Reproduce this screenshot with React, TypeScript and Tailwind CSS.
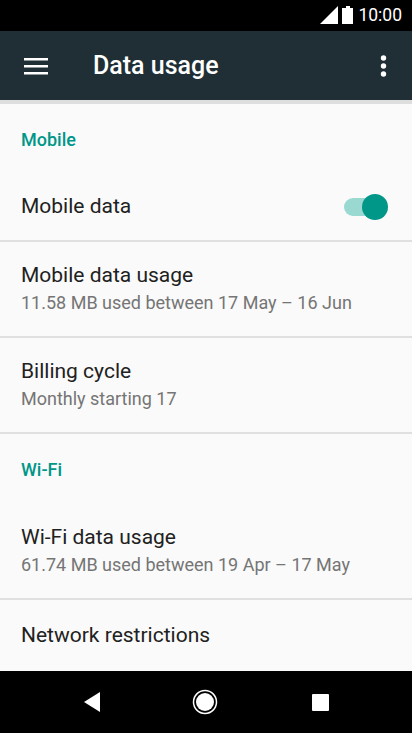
import React from "react";

function StatusBar() {
    return (
        <div className="flex h-[31px] items-center justify-end bg-black pr-[10px] text-white">
            <svg className="h-[31px] w-[38px]" viewBox="0 0 38 31" fill="currentColor">
                <path d="M18 6v18H0z" />
                <path d="M26 6h4v2h3v16H22V8h4z" />
            </svg>
            <span className="text-[17.5px] leading-none">10:00</span>
        </div>
    );
}

function AppBar() {
    return (
        <header className="flex h-[72px] items-center bg-[#1f2f35] px-6 text-white">
            <svg className="h-6 w-6" viewBox="0 0 24 24" fill="currentColor">
                <path d="M0 4h24v2.5H0zM0 11h24v2.5H0zM0 18h24v2.5H0z" />
            </svg>
            <h1 className="ml-[45px] flex-1 text-[25px] font-medium">Data usage</h1>
            <svg className="h-6 w-[9px]" viewBox="0 0 9 24" fill="currentColor">
                <circle cx="4.5" cy="4" r="2.7" />
                <circle cx="4.5" cy="12" r="2.7" />
                <circle cx="4.5" cy="20" r="2.7" />
            </svg>
        </header>
    );
}

function SectionTitle({ children }: { children: React.ReactNode }) {
    return <h2 className="flex h-[70px] items-center px-[21px] text-[18px] font-medium text-[#009688]">{children}</h2>;
}

function Item({ title, summary }: { title: string; summary: string }) {
    return (
        <div className="flex h-24 flex-col justify-center border-b-2 border-[#e0e0e0] px-[21px]">
            <div className="text-[21px] leading-[27px] text-[#212121]">{title}</div>
            <div className="text-[18px] leading-[27px] text-[#757575]">{summary}</div>
        </div>
    );
}

function Switch() {
    return (
        <div className="relative h-[26px] w-[44px]">
            <div className="mt-1 h-[18px] w-[38px] rounded-full bg-[#99d9d2]" />
            <div className="absolute top-0 right-0 size-[26px] rounded-full bg-[#009688]" />
        </div>
    );
}

export default function App() {
    return (
        <div className="flex h-[733px] w-[412px] flex-col overflow-hidden bg-[#fafafa] font-['Roboto',sans-serif]">
            <StatusBar />
            <AppBar />
            <main className="flex-1 border-t-4 border-[#dedede]">
                <SectionTitle>Mobile</SectionTitle>
                <div className="flex h-[68px] items-center justify-between border-b-2 border-[#e0e0e0] pr-6 pl-[21px] text-[21px] text-[#212121]">
                    Mobile data
                    <Switch />
                </div>
                <Item title="Mobile data usage" summary="11.58 MB used between 17 May – 16 Jun" />
                <Item title="Billing cycle" summary="Monthly starting 17" />
                <SectionTitle>Wi-Fi</SectionTitle>
                <Item title="Wi-Fi data usage" summary="61.74 MB used between 19 Apr – 17 May" />
                <div className="flex h-[71px] items-center px-[21px] text-[21px] text-[#212121]">Network restrictions</div>
            </main>
            <nav className="flex h-[62px] items-center bg-black text-white">
                <svg className="h-[62px] w-full" viewBox="0 0 412 62" fill="currentColor">
                    <path d="M84 31l16-10v20z" />
                    <circle cx="205" cy="31" r="11.5" fill="none" stroke="currentColor" strokeWidth="1.5" />
                    <circle cx="205" cy="31" r="9" />
                    <rect x="312" y="23" width="17" height="17" rx="1" />
                </svg>
            </nav>
        </div>
    );
}
